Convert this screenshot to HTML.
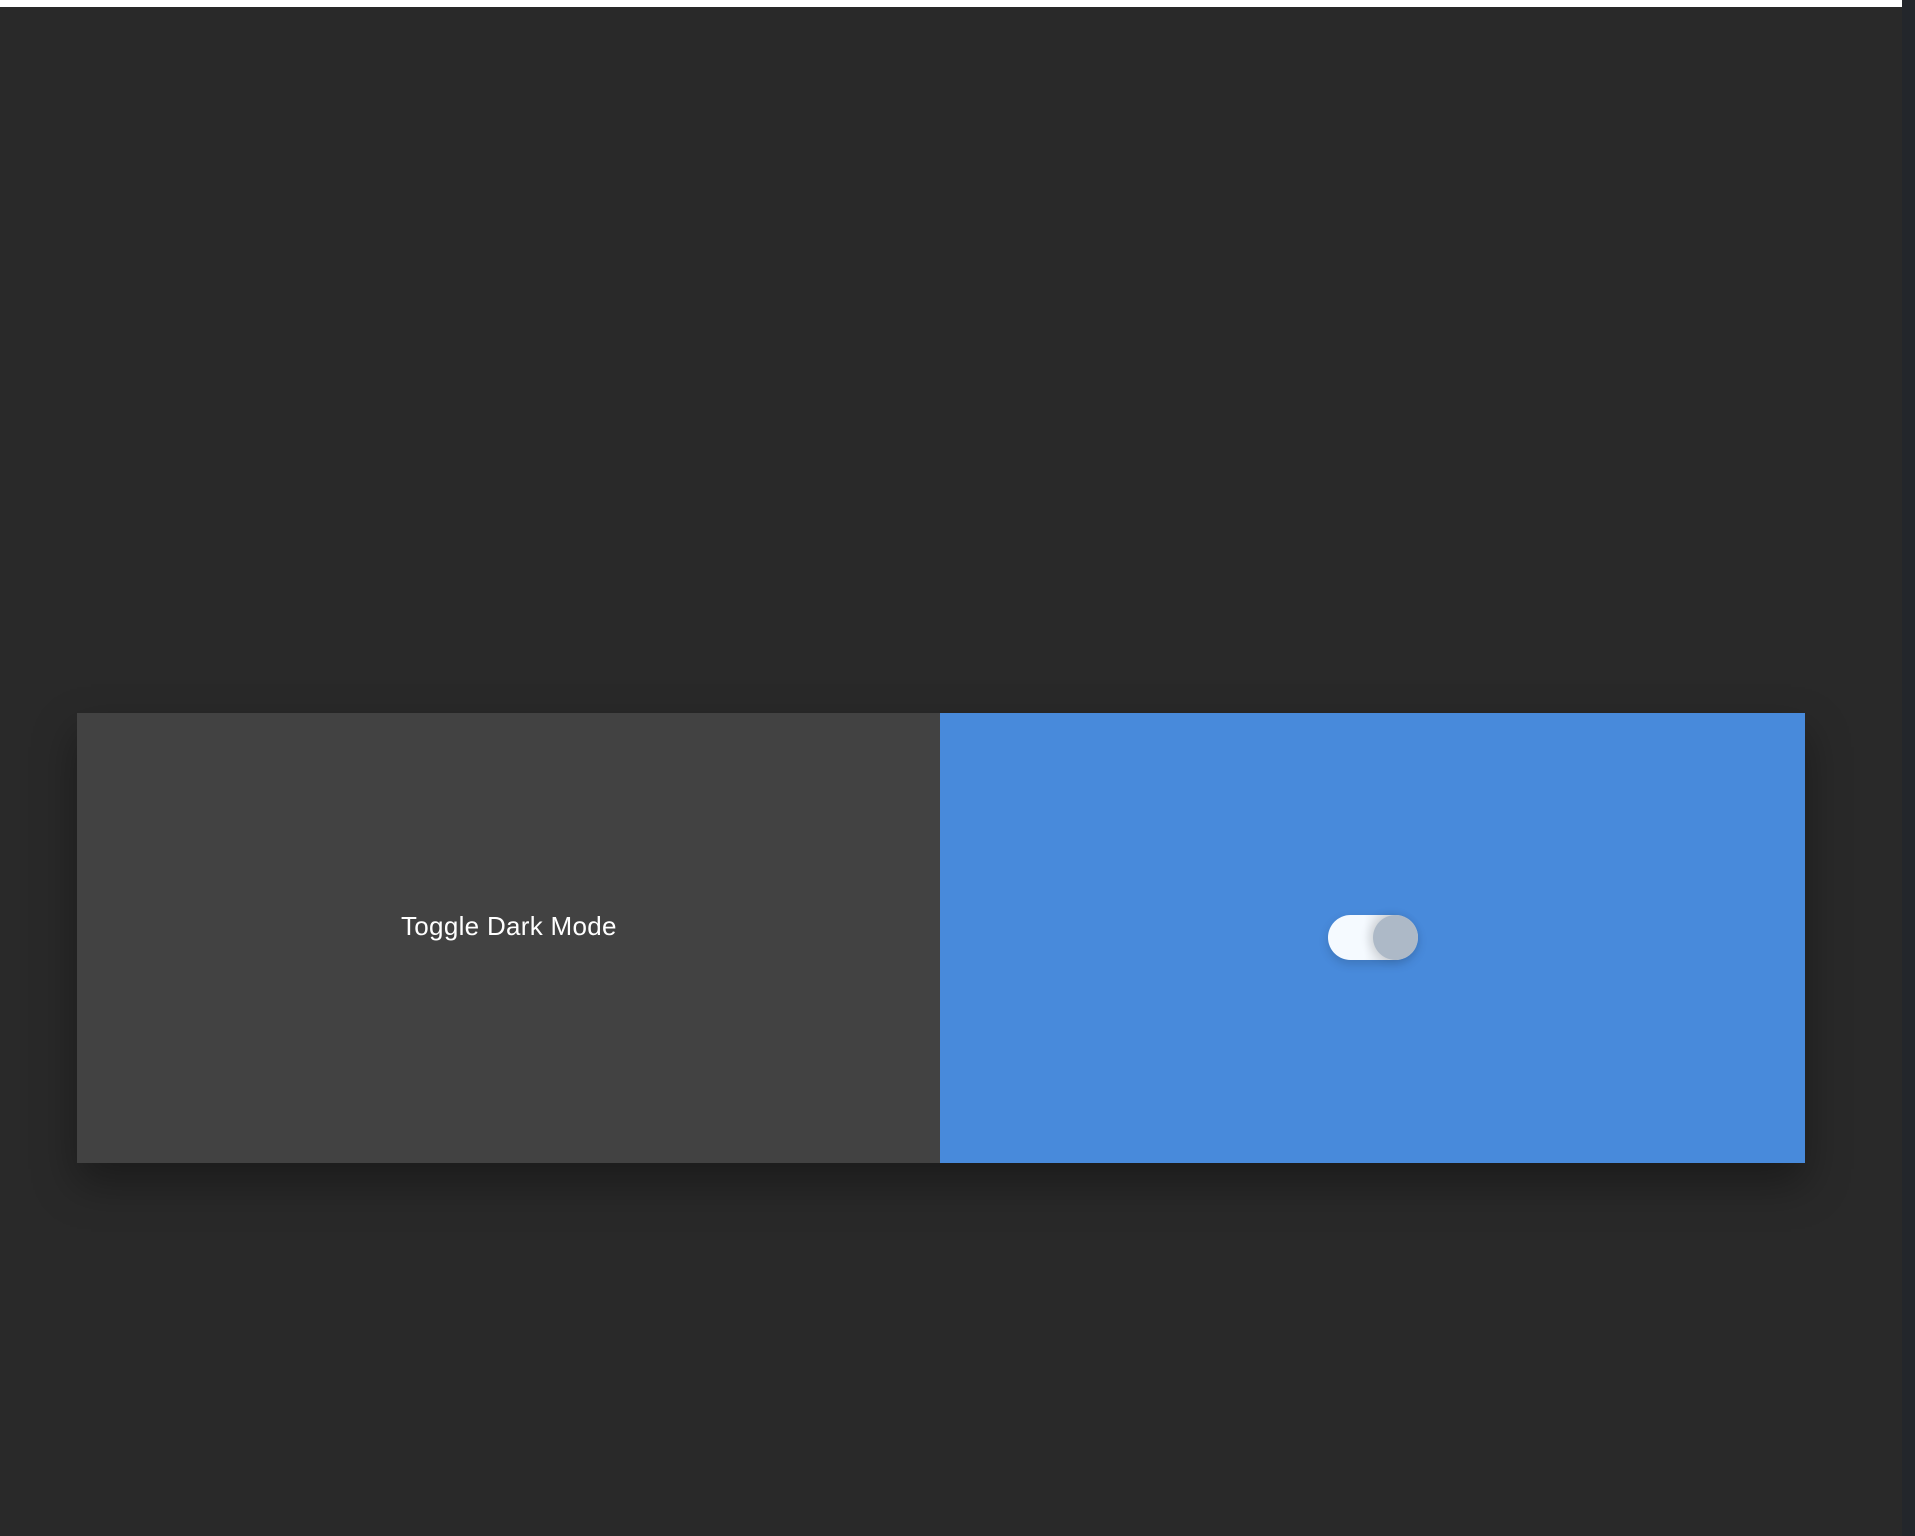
<!DOCTYPE html>
<html><head><style>
html,body{margin:0;padding:0;width:1915px;height:1536px;overflow:hidden;background:#292929;position:relative;font-family:"Liberation Sans",sans-serif}
.top{position:absolute;left:0;top:0;width:1902px;height:7px;background:#fff}
.side{position:absolute;left:1902px;top:0;width:13px;height:1536px;background:#23262b}
.card{position:absolute;left:77px;top:713px;width:1728px;height:450px;box-shadow:0 20px 40px rgba(0,0,0,0.35)}
.l{position:absolute;left:0;top:0;width:863px;height:450px;background:#424242}
.r{position:absolute;left:863px;top:0;width:865px;height:450px;background:#488adb}
.t{position:absolute;left:324px;top:198px;color:#fff;font-size:26px;letter-spacing:0.3px;white-space:nowrap}
.tg{position:absolute;left:1328px;top:915px;width:90px;height:45px;border-radius:23px;background:linear-gradient(90deg,#f5faff 40%,#dfe3e8 65%);box-shadow:0 4px 10px rgba(0,0,0,0.15)}
.k{position:absolute;right:0;top:0;width:45px;height:45px;border-radius:50%;background:#adb9c7;box-shadow:-4px 0 10px rgba(0,0,0,0.12)}
</style></head><body>
<div class="top"></div><div class="side"></div>
<div class="card"><div class="l"><div class="t">Toggle Dark Mode</div></div><div class="r"></div></div>
<div class="tg"><div class="k"></div></div>
</body></html>
